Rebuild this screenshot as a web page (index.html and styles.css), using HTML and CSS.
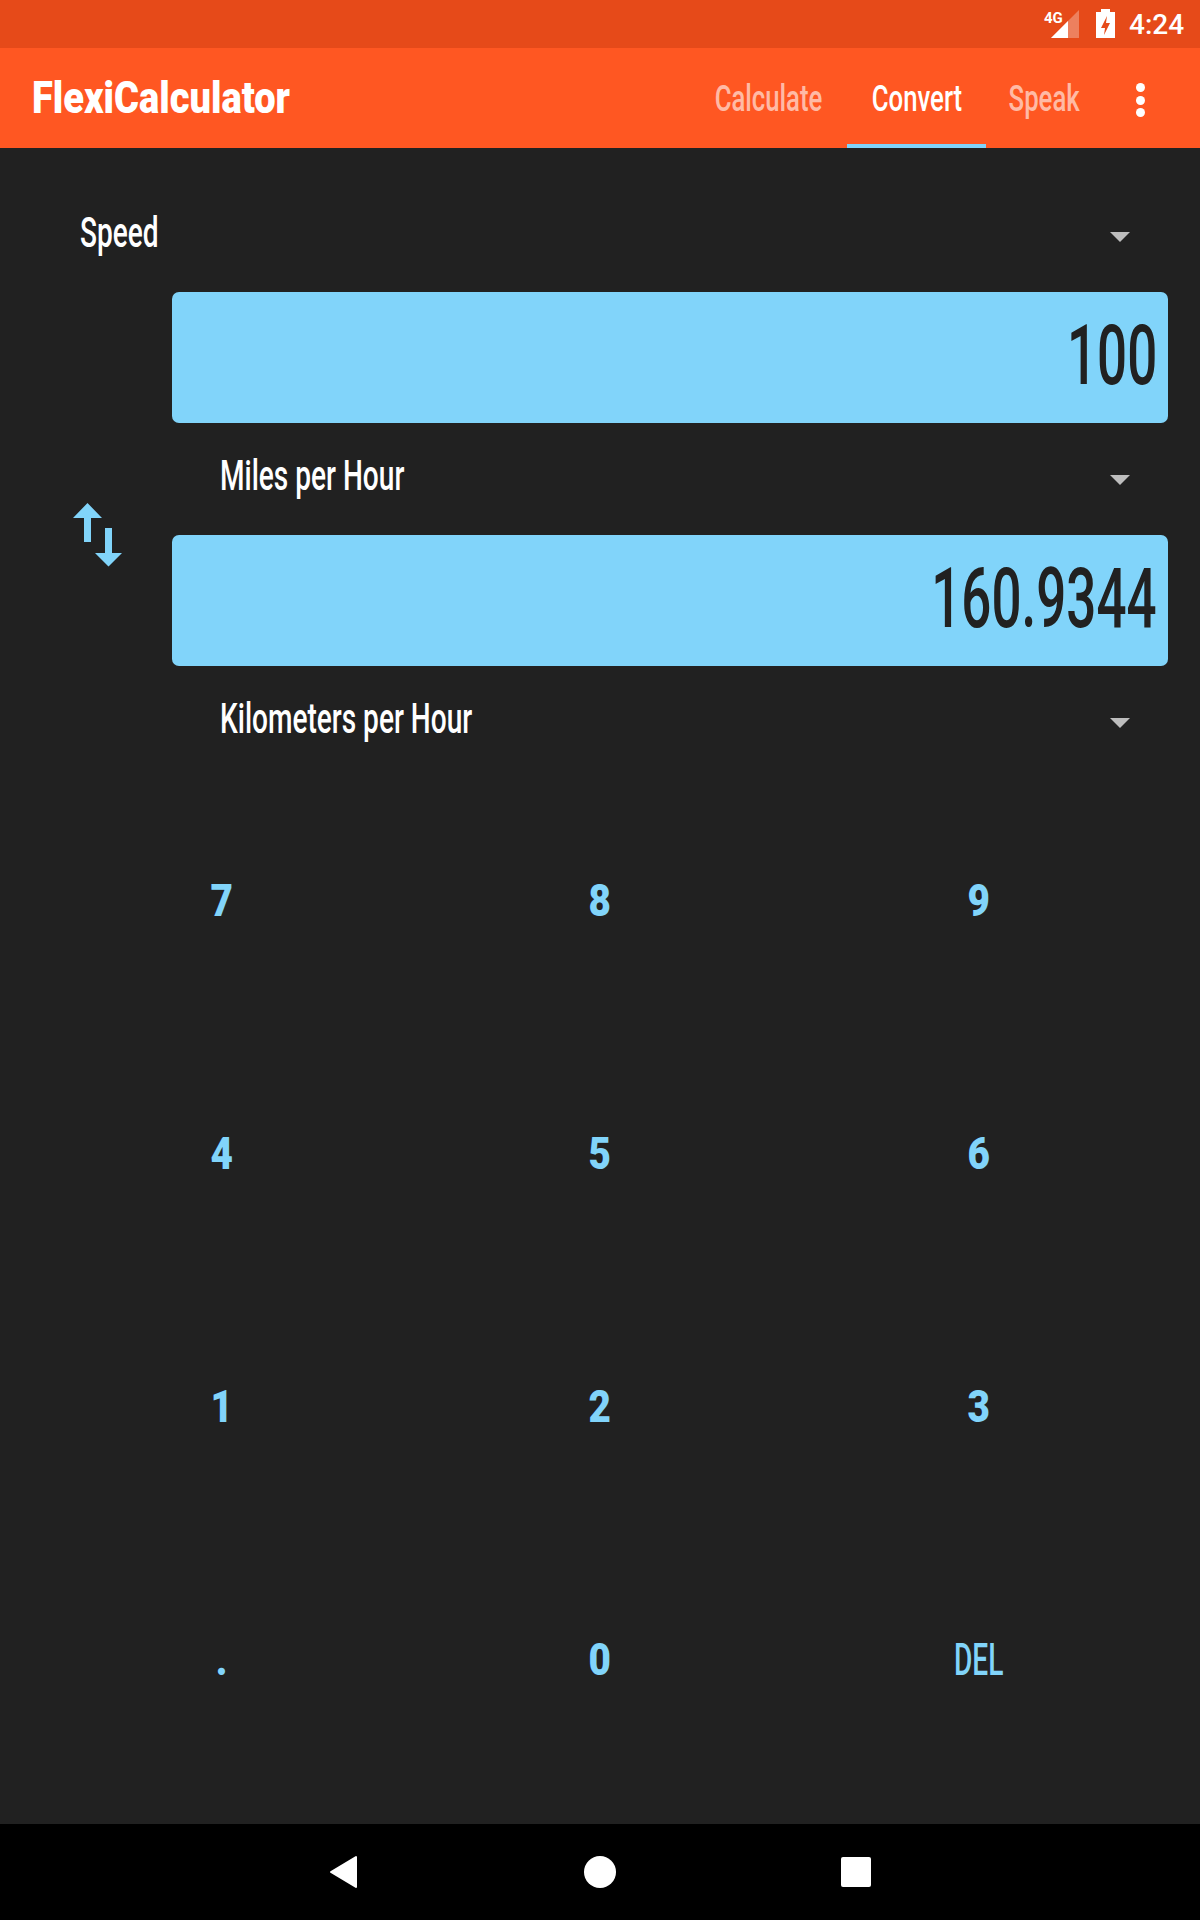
FILE: index.html
```html
<!DOCTYPE html>
<html lang="en">
<head>
<meta charset="utf-8">
<title>FlexiCalculator</title>
<link rel="stylesheet" href="styles.css">
</head>
<body>
<div class="screen">
  <header class="status">
    <span class="net">4G</span>
    <svg class="signal" width="29" height="29" viewBox="0 0 29 29"><polygon points="28,0 28,28 0,28" fill="#fff" fill-opacity=".3"/><polygon points="17,11 17,28 0,28" fill="#fff"/></svg>
    <svg class="battery" width="19" height="29" viewBox="0 0 19 29"><path fill="#fff" fill-rule="evenodd" d="M5 0h9v3h5v26H0V3h5zM11 7l-6 12h4l-1 7 6-12h-4z"/></svg>
    <span class="time">4:24</span>
  </header>
  <nav class="appbar">
    <h1 class="title"><span class="sq sq-title">FlexiCalculator</span></h1>
    <div class="tabs">
      <a class="tab tab-calc"><span class="sq sq-tab">Calculate</span></a>
      <a class="tab tab-conv active"><span class="sq sq-tab">Convert</span></a>
      <a class="tab tab-speak"><span class="sq sq-tab">Speak</span></a>
    </div>
    <div class="menu"><i></i><i></i><i></i></div>
  </nav>
  <main class="content">
    <div class="select select-cat">
      <span class="sq sq-label">Speed</span><b class="caret"></b>
    </div>
    <div class="converter">
      <div class="swap">
        <svg width="50" height="64" viewBox="0 0 50 64"><path fill="#81d4fa" d="M14.500 0L29 15H18v24h-7V15H0zM32 25h7v25h10L35.500 63.500 22 50h10z"/></svg>
      </div>
      <div class="fields">
        <div class="value"><span class="sq sq-value">100</span></div>
        <div class="select select-unit"><span class="sq sq-label">Miles per Hour</span><b class="caret"></b></div>
        <div class="value"><span class="sq sq-value">160.9344</span></div>
        <div class="select select-unit"><span class="sq sq-label">Kilometers per Hour</span><b class="caret"></b></div>
      </div>
    </div>
    <div class="keypad">
      <button class="key"><span class="sq sq-key">7</span></button>
      <button class="key"><span class="sq sq-key">8</span></button>
      <button class="key"><span class="sq sq-key">9</span></button>
      <button class="key"><span class="sq sq-key">4</span></button>
      <button class="key"><span class="sq sq-key">5</span></button>
      <button class="key"><span class="sq sq-key">6</span></button>
      <button class="key"><span class="sq sq-key">1</span></button>
      <button class="key"><span class="sq sq-key">2</span></button>
      <button class="key"><span class="sq sq-key">3</span></button>
      <button class="key"><span class="sq sq-key">.</span></button>
      <button class="key"><span class="sq sq-key">0</span></button>
      <button class="key"><span class="sq sq-del">DEL</span></button>
    </div>
  </main>
  <footer class="navbar">
    <span class="navitem"><svg width="30" height="34" viewBox="0 0 30 34"><path fill="#fff" stroke="#fff" stroke-width="2" stroke-linejoin="round" d="M2 17L27 2v30z"/></svg></span>
    <span class="navitem"><span class="home"></span></span>
    <span class="navitem"><span class="recent"></span></span>
  </footer>
</div>
</body>
</html>
```
FILE: styles.css
```css
* { box-sizing: border-box; }
html, body { margin: 0; padding: 0; }
body { background: #212121; font-family: Roboto, "Liberation Sans", sans-serif; }
.screen { width: 1200px; height: 1920px; display: flex; flex-direction: column; overflow: hidden; }

.sq { display: inline-block; white-space: nowrap; }

.status { height: 48px; background: #e64a19; display: flex; align-items: flex-start; color: #fff; padding-left: 1044px; }
.net { width: 7px; font-size: 15px; font-weight: 700; line-height: 14px; margin-top: 11px; letter-spacing: -.2px; }
.signal { margin: 10px 0 0 0; flex: none; }
.battery { margin: 9px 0 0 16px; flex: none; }
.time { font-size: 28px; font-weight: 500; line-height: 32px; margin: 9px 0 0 14px; }

.appbar { height: 100px; background: #ff5722; display: flex; align-items: stretch; color: #fff; }
.title { margin: 0; flex: 0 0 690px; padding-left: 32px; font-size: 44px; font-weight: 900; line-height: 100px; }
.sq-title { transform: scaleX(.865); transform-origin: left center; }
.tabs { display: flex; flex: none; }
.tab { display: flex; align-items: center; justify-content: center; font-size: 37px; font-weight: 500; color: rgba(255,255,255,.6); border-bottom: 4px solid transparent; padding-top: 4px; white-space: nowrap; }
.tab.active { color: #fff; border-bottom-color: #81d4fa; }
.tab-calc { width: 157px; }
.tab-conv { width: 139px; }
.tab-speak { width: 117px; }
.sq-tab { transform: scaleX(.695); }
.menu { flex: 1; display: flex; flex-direction: column; justify-content: center; align-items: center; gap: 3.500px; padding-right: 22px; padding-top: 4px; }
.menu i { width: 9px; height: 9px; border-radius: 50%; background: #fff; }

.content { flex: 1; display: flex; flex-direction: column; padding: 48px 32px 0; }
.select { height: 72px; display: flex; align-items: center; justify-content: space-between; color: #fff; font-size: 42px; font-weight: 500; }
.sq-label { transform: scaleX(.668); transform-origin: left center; }
.select-cat { padding: 0 38px 0 48px; margin-bottom: 24px; }
.select-unit { padding: 0 38px 0 48px; margin: 16px 0 24px; }
.select-unit:last-child { margin-bottom: 0; }
.caret { width: 0; height: 0; border-left: 10px solid transparent; border-right: 10px solid transparent; border-top: 10px solid #bdbdbd; margin-top: 10px; }

.converter { display: flex; }
.swap { flex: 0 0 140px; padding: 211px 0 0 41px; }
.fields { flex: 1; }
.value { height: 131px; background: #81d4fa; border-radius: 7px; color: #212121; font-size: 84px; font-weight: 500; text-align: right; padding-right: 11px; line-height: 127px; }
.sq-value { transform: scaleX(.63); transform-origin: right center; }

.keypad { flex: 1; display: grid; grid-template-columns: repeat(3, 1fr); grid-template-rows: repeat(4, 253px); margin-top: 20px; }
.key { background: none; border: 0; padding: 0; font-family: inherit; color: #81d4fa; font-size: 44px; font-weight: 900; }
.sq-key { transform: scaleX(.88); }
.sq-del { font-weight: 500; transform: scaleX(.64); }

.navbar { height: 96px; background: #000; display: grid; grid-template-columns: repeat(3, 256px); justify-content: center; align-items: center; }
.navitem { display: flex; justify-content: center; align-items: center; }
.home { width: 32px; height: 32px; border-radius: 50%; background: #fff; }
.recent { width: 30px; height: 30px; border-radius: 2px; background: #fff; }
```
